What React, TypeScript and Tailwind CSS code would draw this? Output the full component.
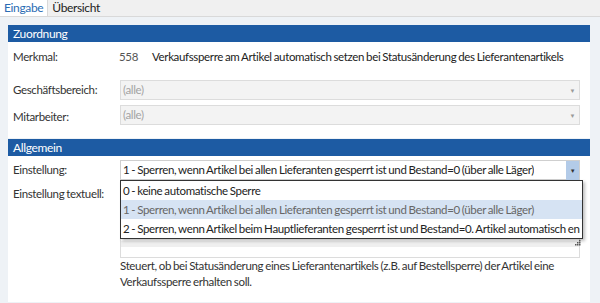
import type { ReactNode } from 'react'

const font = { fontFamily: 'Lato, "Open Sans", sans-serif', wordSpacing: '-0.6px' }

function SectionHeader({ title }: { title: string }) {
    return (
        <div className="flex h-[17px] items-center bg-[#1d5ba3] px-[5px] text-[12px] text-white">
            {title}
        </div>
    )
}

function Row({ label, children, className }: { label: string; children: ReactNode; className?: string }) {
    return (
        <div className={`flex ${className ?? ''}`}>
            <div className="w-[107px] shrink-0 text-[#333]">{label}</div>
            <div className="min-w-0 flex-1">{children}</div>
        </div>
    )
}

function DisabledSelect() {
    return (
        <div className="flex h-[20px] items-center justify-between border border-[#dcdcdc] bg-[#f3f3f3] pl-[2px] pr-[4px] text-[#a3a3a3]">
            <span>(alle)</span>
            <span className="text-[6px] text-[#999]">▼</span>
        </div>
    )
}

function Grip() {
    return (
        <svg width="6" height="6" viewBox="0 0 6 6" className="absolute -bottom-[8px] right-[1px]">
            <rect x="4" y="0" width="1.5" height="1.5" fill="#555" />
            <rect x="2" y="2" width="1.5" height="1.5" fill="#555" />
            <rect x="4" y="2" width="1.5" height="1.5" fill="#555" />
            <rect x="0" y="4" width="1.5" height="1.5" fill="#555" />
            <rect x="2" y="4" width="1.5" height="1.5" fill="#555" />
            <rect x="4" y="4" width="1.5" height="1.5" fill="#555" />
        </svg>
    )
}

const options = [
    '0 - keine automatische Sperre',
    '1 - Sperren, wenn Artikel bei allen Lieferanten gesperrt ist und Bestand=0 (über alle Läger)',
    '2 - Sperren, wenn Artikel beim Hauptlieferanten gesperrt ist und Bestand=0. Artikel automatisch en',
]

export default function App() {
    return (
        <div style={font} className="flex h-[303px] w-[600px] flex-col overflow-hidden whitespace-nowrap bg-[#eef2f6] text-[11.5px] tracking-[-0.35px]">
            <div className="flex h-[17px] shrink-0 items-end border-b border-[#d9d9d9] bg-[#f0f0f0] text-[12px]">
                <div className="flex h-[17px] items-center border-r border-[#d9d9d9] bg-white px-[4px] text-[#2b6cb4]">
                    Eingabe
                </div>
                <div className="flex h-[17px] items-center px-[4px] text-[#222]">Übersicht</div>
            </div>

            <div className="mx-[8px] mt-[8px] w-[582px]">
                <SectionHeader title="Zuordnung" />
                <div className="flex flex-col bg-white pb-[13px] pl-[5px] pr-[10px] pt-[7px]">
                    <div className="flex h-[16px] items-center text-[#333]">
                        <div className="w-[106px]">Merkmal:</div>
                        <div className="w-[33px] text-[#555]">558</div>
                        <div className="text-[#222]">
                            Verkaufssperre am Artikel automatisch setzen bei Statusänderung des Lieferantenartikels
                        </div>
                    </div>
                    <Row label="Geschäftsbereich:" className="mt-[15px] items-center">
                        <DisabledSelect />
                    </Row>
                    <Row label="Mitarbeiter:" className="mt-[5px] items-end">
                        <DisabledSelect />
                    </Row>
                </div>
            </div>

            <div className="mx-[8px] mt-[1px] w-[582px]">
                <SectionHeader title="Allgemein" />
                <div className="relative flex flex-col bg-white pb-[12px] pl-[5px] pr-[10px] pt-[4px]">
                    <Row label="Einstellung:" className="items-center">
                        <div className="flex h-[20px] items-center justify-between border border-[#cfcfcf] bg-white pl-[2px] text-[#222]">
                            <span className="overflow-hidden">{options[1]}</span>
                            <span className="flex h-[19px] w-[13px] shrink-0 items-center justify-center bg-[#b3cbe8] text-[6px] text-[#333]">
                                ▼
                            </span>
                        </div>
                    </Row>
                    <Row label="Einstellung textuell:" className="mt-[5px] items-start">
                        <div className="flex h-[73px] flex-col justify-end border border-[#dcdcdc] bg-white">
                            <div className="h-[6px] bg-[#efefef]" />
                            <div className="h-[10px]" />
                        </div>
                        <div className="leading-[16px] text-[#333]">
                            Steuert, ob bei Statusänderung eines Lieferantenartikels (z.B. auf Bestellsperre) der Artikel eine
                            <br />
                            Verkaufssperre erhalten soll.
                        </div>
                    </Row>

                    <div className="absolute left-[112px] top-[24px] w-[463px] border border-[#333] bg-white shadow-[2px_2px_3px_rgba(0,0,0,0.25)]">
                        <div className="flex h-[19px] items-center px-[2px] text-[#222]">{options[0]}</div>
                        <div className="flex h-[19px] items-center bg-[#d6e3f3] px-[2px] text-[#666]">{options[1]}</div>
                        <div className="flex h-[19px] items-center overflow-hidden px-[2px] text-[#222]">{options[2]}</div>
                        <Grip />
                    </div>
                </div>
            </div>
        </div>
    )
}
